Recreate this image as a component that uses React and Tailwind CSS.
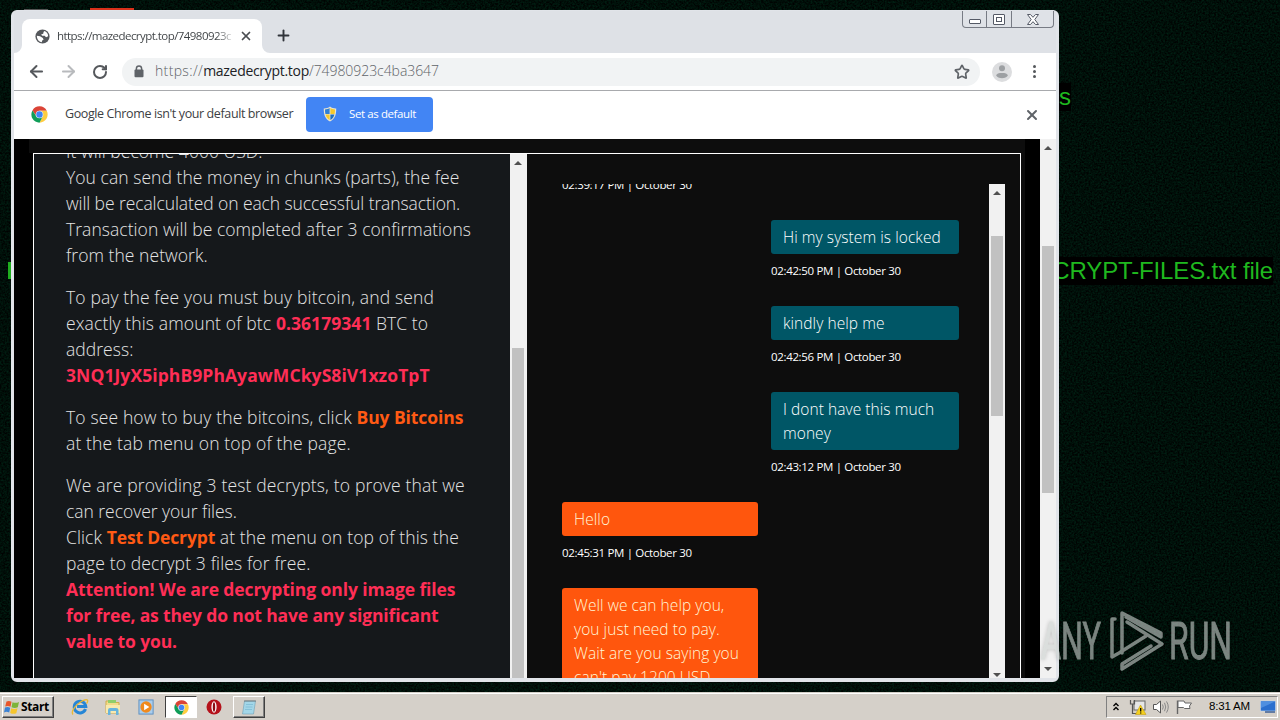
import React from "react";
import { RotateCw, Star, X, Plus, ArrowLeft, ArrowRight } from "lucide-react";

const messages = [
  { id: 1, mine: true, lines: ["Hi my system is locked"], time: "02:42:50 PM | October 30" },
  { id: 2, mine: true, lines: ["kindly help me"], time: "02:42:56 PM | October 30" },
  { id: 3, mine: true, lines: ["I dont have this much", "money"], time: "02:43:12 PM | October 30" },
  { id: 4, mine: false, lines: ["Hello"], time: "02:45:31 PM | October 30" },
  {
    id: 5,
    mine: false,
    lines: ["Well we can help you,", "you just need to pay.", "Wait are you saying you", "can't pay 1200 USD"],
  },
];

const ChromeLogo = ({ className }) => (
  <svg viewBox="0 0 48 48" className={className}>
    <path d="M24 13.5 H44.5 A23 23 0 0 0 4.1 12.5 L15 29 Z" fill="#db4437" />
    <path d="M33 29 L24 47 A23 23 0 0 0 44.5 13.5 H24 Z" fill="#ffcd40" />
    <path d="M15 29 L4.1 12.5 A23 23 0 0 0 24 47 L33 29.3 Z" fill="#0f9d58" />
    <circle cx="24" cy="24" r="10.8" fill="#f1f1f1" />
    <circle cx="24" cy="24" r="9" fill="#4285f4" />
  </svg>
);

const Shield = () => (
  <svg viewBox="0 0 16 16" className="h-4 w-4">
    <path d="M8 .5 C6 2 4 2.5 1.8 2.4 C1.6 8 3 13 8 15.5 C13 13 14.4 8 14.2 2.4 C12 2.5 10 2 8 .5Z" fill="#e9e4d0" />
    <path d="M7.6 2 C6 3 4.8 3.4 3 3.5 C3 5 3 6.5 3.4 8 H7.6Z" fill="#2f7fd6" />
    <path d="M8.4 2 C10 3 11.2 3.4 13 3.5 C13 5 13 6.5 12.6 8 H8.4Z" fill="#f6c92c" />
    <path d="M3.6 8.4 H7.6 V14 C5.4 12.8 4.2 11 3.6 8.4Z" fill="#f6c92c" />
    <path d="M12.4 8.4 H8.4 V14 C10.6 12.8 11.8 11 12.4 8.4Z" fill="#1d6fc4" />
  </svg>
);

const Globe = () => (
  <svg viewBox="0 0 24 24" className="h-[17px] w-[17px]">
    <circle cx="12" cy="12" r="10" fill="#55585c" />
    <path d="M14.5 4.3 C18 5.4 20 8.5 20 11.5 L17 13 L15 11 H11.5 L10 9 L13 8 L13.5 5.5Z" fill="#fff" />
    <path d="M4 11 L8.5 11.5 L12.5 14 L13.5 16.5 L11.5 17.5 L11 20 C7 19.6 4 16 4 11Z" fill="#fff" />
  </svg>
);

const Arrow = ({ down }) => (
  <svg viewBox="0 0 8 4" className={down ? "h-1 w-2 rotate-180" : "h-1 w-2"}>
    <path d="M4 0 L8 4 H0Z" fill="#505050" />
  </svg>
);

// white side gutters with the grey thumb, sizes come from the caller
const Scrollbar = ({ className, track, thumb, bottom }) => (
  <div className={`flex shrink-0 flex-col items-center bg-[#f1f1f1] ${className}`}>
    <div className="flex h-[17px] shrink-0 items-center">
      <Arrow />
    </div>
    <div className={`shrink-0 ${track}`} />
    <div className={`w-3 shrink-0 bg-[#c1c1c1] ${thumb}`} />
    {bottom && (
      <div className={`mt-auto ${bottom}`}>
        <Arrow down />
      </div>
    )}
  </div>
);

const Desktop = () => (
  <>
    <svg className="absolute inset-0 h-full w-full">
      <filter id="grain" x="0" y="0" width="100%" height="100%" colorInterpolationFilters="sRGB">
        <feTurbulence type="fractalNoise" baseFrequency="0.55" numOctaves="2" seed="4" />
        <feColorMatrix values="0 0 0 0 0  0 0.2 0 0 -0.04  0 0.12 0 0 -0.025  0 0 0 0 1" />
      </filter>
      <rect width="100%" height="100%" filter="url(#grain)" />
    </svg>
    <div className="absolute top-[9px] left-6 h-px w-6 bg-[#555]" />
    <div className="absolute top-2 left-[90px] h-[3px] w-11 bg-[#d9301a]" />
    <div className="absolute top-[262px] left-2 h-[17px] w-[3px] bg-[#1fae1f]" />
    <div className="absolute top-[83px] right-[209px] bg-black font-['Liberation_Sans'] text-[24px] leading-[28px] text-[#1fb81f]">
      files
    </div>
    <div className="absolute top-[257px] right-[7px] bg-black font-['Liberation_Sans'] text-[24px] leading-[28px] tracking-[-0.15px] whitespace-nowrap text-[#1fb81f]">
      DECRYPT-FILES.txt file
    </div>
  </>
);

const WindowButtons = () => (
  <div className="absolute top-0 right-[2px] flex h-[17px] rounded-b border border-t-0 border-[#777b84] bg-[#dfe2e7]">
    <div className="flex w-6 items-end justify-center border-r border-[#777b84] pb-[3px]">
      <div className="h-[5px] w-3 rounded-[1px] border border-[#555a66] bg-white" />
    </div>
    <div className="flex w-[25px] items-center justify-center border-r border-[#777b84]">
      <div className="flex h-[11px] w-3 items-center justify-center rounded-[1px] border border-[#555a66] bg-white">
        <div className="h-[5px] w-[6px] border border-[#555a66]" />
      </div>
    </div>
    <div className="flex w-[41px] items-center justify-center">
      <svg viewBox="0 0 12 11" className="h-[11px] w-3">
        <path
          d="M.5 .5 H3.5 L6 3.3 L8.5 .5 H11.5 L7.8 5.5 L11.5 10.5 H8.5 L6 7.7 L3.5 10.5 H.5 L4.2 5.5Z"
          fill="#fff"
          stroke="#555a66"
          strokeWidth="1"
        />
      </svg>
    </div>
  </div>
);

const TabStrip = () => (
  <div className="flex h-[42px] shrink-0 items-end bg-[#dee1e6]">
    <svg viewBox="0 0 8 8" className="h-2 w-2">
      <path d="M8 0 V8 H0 A8 8 0 0 0 8 0Z" fill="#fff" />
    </svg>
    <div className="flex h-[34px] w-60 items-center rounded-t-lg bg-white pl-3">
      <Globe />
      <div className="ml-[6px] w-[178px] bg-gradient-to-r from-[#3c4043] from-90% to-transparent bg-clip-text text-[11.5px] tracking-[-0.55px] whitespace-nowrap text-transparent">
        https://mazedecrypt.top/74980923c
      </div>
      <X className="ml-1 h-[14px] w-[14px] text-[#4a4d51]" strokeWidth={3} />
    </div>
    <svg viewBox="0 0 8 8" className="h-2 w-2">
      <path d="M0 0 V8 H8 A8 8 0 0 1 0 0Z" fill="#fff" />
    </svg>
    <Plus className="mb-[9px] ml-[5px] h-[17px] w-[17px] text-[#30343a]" strokeWidth={2.7} />
  </div>
);

const Toolbar = () => (
  <div className="flex h-[37px] shrink-0 items-center bg-white pl-[13px]">
    <ArrowLeft className="h-[19px] w-[19px] text-[#55585c]" strokeWidth={2.5} />
    <ArrowRight className="ml-[13px] h-[19px] w-[19px] text-[#b8babd]" strokeWidth={2.5} />
    <RotateCw className="ml-[14px] h-4 w-4 text-[#55585c]" strokeWidth={3} />
    <div className="ml-[14px] flex h-7 w-[858px] items-center rounded-full bg-[#f1f3f4] pl-3">
      <svg viewBox="0 0 10 13" className="h-[13px] w-[10px]">
        <path d="M2.4 5 V3.5 A2.6 2.6 0 0 1 7.6 3.5 V5" fill="none" stroke="#5f6368" strokeWidth="1.5" />
        <rect x=".5" y="4.6" width="9" height="7.6" rx="1" fill="#5f6368" />
      </svg>
      <div className="ml-[11px] pb-[2px] text-[14px] font-light whitespace-nowrap text-[#5f6368]">
        <span className="tracking-[0.35px]">https://</span>
        <span className="font-normal tracking-[-0.3px] text-[#202124]">mazedecrypt.top</span>
        <span className="tracking-[-0.06px]">/74980923c4ba3647</span>
      </div>
      <Star className="mr-[10px] ml-auto h-4 w-4 text-[#5f6368]" strokeWidth={2.5} />
    </div>
    <svg viewBox="0 0 20 20" className="ml-3 h-5 w-5">
      <circle cx="10" cy="10" r="10" fill="#dcdddf" />
      <circle cx="10" cy="6.3" r="3" fill="#9da0a3" />
      <path d="M4.2 13.8 C4.2 11.5 7 11 10 11 S15.8 11.5 15.8 13.8 C14 15.6 12 16.2 10 16.2 S6 15.6 4.2 13.8Z" fill="#9da0a3" />
    </svg>
    <div className="ml-[21px] flex flex-col gap-[2px]">
      <div className="h-[3px] w-[3px] rounded-full bg-[#55585c]" />
      <div className="h-[3px] w-[3px] rounded-full bg-[#55585c]" />
      <div className="h-[3px] w-[3px] rounded-full bg-[#55585c]" />
    </div>
  </div>
);

const InfoBar = () => (
  <div className="flex h-[49px] shrink-0 items-center border-t border-[#a8aaad] bg-white pb-[2px] pl-[17px]">
    <ChromeLogo className="mt-px h-[17px] w-[17px]" />
    <span className="mt-px ml-[17px] w-[229px] text-[12.5px] tracking-[-0.39px] whitespace-nowrap text-[#3c4043]">
      Google Chrome isn't your default browser
    </span>
    <button className="ml-3 flex h-[35px] w-[127px] items-center rounded bg-[#4285f4] pl-4">
      <Shield />
      <span className="ml-[11px] pb-px text-[11.5px] tracking-[-0.4px] whitespace-nowrap text-white">Set as default</span>
    </button>
    <X className="mt-px mr-4 ml-auto h-4 w-4 text-[#5f6368]" strokeWidth={3} />
  </div>
);

const Note = () => (
  <div className="w-[476px] overflow-hidden bg-[#15181b]">
    <div className="-mt-4 pl-8 text-[17.5px] leading-[26px] font-light tracking-[0.05px] whitespace-nowrap text-[#e4e4e4]">
      <p className="mb-4">
        It will become 4000 USD.
        <br />
        You can send the money in chunks (parts), the fee
        <br />
        <span className="tracking-[-0.09px]">will be recalculated on each successful transaction.</span>
        <br />
        Transaction will be completed after 3 confirmations
        <br />
        from the network.
      </p>
      <p className="mb-4">
        <span className="tracking-[0.16px]">To pay the fee you must buy bitcoin, and send</span>
        <br />
        <span className="tracking-[0.13px]">exactly this amount of btc </span>
        <b className="font-bold text-[#ff2e56]">0.36179341</b>
        <span className="tracking-[0.05px]"> BTC to</span>
        <br />
        address:
        <br />
        <b className="font-bold tracking-[0.08px] text-[#ff2e56]">3NQ1JyX5iphB9PhAyawMCkyS8iV1xzoTpT</b>
      </p>
      <p className="mb-4">
        <span className="tracking-[0.14px]">To see how to buy the bitcoins, click </span>
        <b className="font-bold tracking-[-0.08px] text-[#ff5a14]">Buy Bitcoins</b>
        <br />
        <span className="tracking-[0.15px]">at the tab menu on top of the page.</span>
      </p>
      <p>
        <span className="tracking-[0.16px]">We are providing 3 test decrypts, to prove that we</span>
        <br />
        <span className="tracking-[-0.03px]">can recover your files.</span>
        <br />
        <span className="tracking-[0.1px]">Click </span>
        <b className="font-bold tracking-[-0.15px] text-[#ff5a14]">Test Decrypt</b>
        <span className="tracking-[0.13px]"> at the menu on top of this the</span>
        <br />
        <span className="tracking-[0.14px]">page to decrypt 3 files for free.</span>
        <br />
        <b className="font-bold text-[#ff2e56]">
          <span className="tracking-[-0.1px]">Attention! We are decrypting only image files</span>
          <br />
          <span className="tracking-[-0.14px]">for free, as they do not have any significant</span>
          <br />
          <span className="tracking-[-0.12px]">value to you.</span>
        </b>
      </p>
    </div>
  </div>
);

const Chat = () => (
  <div className="flex flex-1 pt-[30px] pr-[15px] pl-[35px]">
    <div className="flex h-[494px] flex-1 flex-col overflow-hidden pr-[30px]">
      <div className="-mt-2 mb-[26px] h-[18px] shrink-0 text-[11.5px] leading-[18px] tracking-[-0.34px] text-white">
        02:39:17 PM | October 30
      </div>
      {messages.map((m) => (
        <div key={m.id} className={m.mine ? "w-[188px] shrink-0 self-end" : "w-[196px] shrink-0"}>
          <div
            className={`rounded-[3px] px-3 py-[5px] text-[15.5px] leading-6 font-light tracking-[0.06px] whitespace-nowrap ${
              m.mine ? "bg-[#005666] text-white" : "bg-[#ff560d] text-[#fff6d8]"
            }`}
          >
            {m.lines.map((line) => (
              <div key={line}>{line}</div>
            ))}
          </div>
          {m.time && (
            <div className="mt-2 mb-[26px] text-[11.5px] leading-[18px] tracking-[-0.34px] whitespace-nowrap text-white">{m.time}</div>
          )}
        </div>
      ))}
    </div>
    <Scrollbar className="h-[494px] w-4" track="h-[35px]" thumb="h-[180px]" bottom="pb-[1px]" />
  </div>
);

const Page = () => (
  <div className="flex h-[539px] bg-black">
    <div className="ml-[15px] flex w-[996px] bg-[#0d0d0d] pt-[14px] pr-[4px]">
      <div className="w-1 bg-black" />
      <div className="flex flex-1 border border-b-0 border-white">
        <Note />
        <Scrollbar className="w-[17px] pr-[1px]" track="h-[177px]" thumb="flex-1" />
        <Chat />
      </div>
    </div>
    <Scrollbar className="ml-[15px] w-4" track="h-[90px]" thumb="h-[247px]" bottom="pb-[7px]" />
  </div>
);

const Watermark = () => (
  <svg viewBox="0 0 200 70" className="absolute top-[605px] left-[1035px] h-[70px] w-[200px] opacity-60 drop-shadow-[0_0_2px_rgba(0,0,0,0.35)]">
    <g fill="#cdd3d0" stroke="#cdd3d0" strokeWidth="0.9" fontFamily="Roboto, 'Liberation Sans', sans-serif" fontSize="52">
      <text x="6" y="54" textLength="60" lengthAdjust="spacingAndGlyphs">ANY</text>
      <text x="134" y="54" textLength="63" lengthAdjust="spacingAndGlyphs">RUN</text>
    </g>
    <g fill="none" stroke="#cdd3d0" strokeWidth="3.5" strokeLinejoin="round" strokeLinecap="round">
      <path d="M80 14 L77 14 V52 L84 48 L111 31" />
      <path d="M87 48 V8 L126 28 V32 L91 12" />
      <path d="M92 17 L127 39 L87 64 V59 L116 41" />
    </g>
  </svg>
);

const Browser = () => (
  <div className="absolute top-[10px] left-[11px] flex h-[672px] w-[1048px] flex-col rounded-md border-[3px] border-t border-b-4 border-[#e1e4e9] bg-white">
    <WindowButtons />
    <TabStrip />
    <Toolbar />
    <InfoBar />
    <Page />
  </div>
);

const Taskbar = () => (
  <div className="flex h-7 shrink-0 items-center border-t border-[#d4d0c8] bg-[#d5d0c9] pt-[1px] shadow-[inset_0_1px_0_#fff]">
    <button className="ml-[2px] flex h-[22px] w-[52px] shrink-0 items-center border border-t-white border-r-[#404040] border-b-[#404040] border-l-white pl-[1px] shadow-[inset_-1px_-1px_0_#808080]">
      <svg viewBox="0 0 16 15" className="h-[15px] w-4">
        <path d="M2.5 1.5 Q5 .2 7.5 1.8 L6.5 6.8 Q4 5.4 1.2 6.6Z" fill="#e8562a" />
        <path d="M8.5 2.2 Q11.5 3.6 15 2 L13.8 7.2 Q10.8 8.6 7.5 7.2Z" fill="#7db43a" />
        <path d="M1 7.6 Q3.6 6.4 6.2 7.8 L5.2 12.6 Q2.6 11.2 0 12.4Z" fill="#3b82d4" />
        <path d="M7.2 8.2 Q10.2 9.6 13.5 8.2 L12.3 13.2 Q9.4 14.6 6.2 13Z" fill="#f5c52c" />
      </svg>
      <span className="ml-px text-[12px] font-bold tracking-[-0.35px] text-black">Start</span>
    </button>
    <svg viewBox="0 0 18 18" className="ml-[17px] h-[18px] w-[18px]">
      <path d="M14.5 11 A5.8 5.8 0 1 1 14.8 8.6 H6" fill="none" stroke="#2686d6" strokeWidth="3" />
      <path d="M2 16.5 C-1 13 7 4 14 1.8 C17 1 17.5 3 15.5 5.5" fill="none" stroke="#e9b936" strokeWidth="1.3" />
    </svg>
    <svg viewBox="0 0 18 18" className="ml-[15px] h-[18px] w-[18px]">
      <path d="M2 3 H7 L8.5 4.5 H15 V15 H2Z" fill="#f2dc8a" stroke="#d1ad4c" />
      <rect x="4" y="2" width="8" height="3" fill="#8fce6a" />
      <path d="M2 7 H16 V15 H2Z" fill="#f8e9ae" />
      <path d="M4 17 V12 Q4 10 6 10 H12 Q14.5 10 14.5 12 V17 H12 V13 H6.5 V17Z" fill="#67b4dd" />
    </svg>
    <svg viewBox="0 0 18 18" className="ml-4 h-[18px] w-[17px]">
      <rect x="1" y="1.5" width="15" height="15" fill="#a9cdec" stroke="#5c8fc0" />
      <circle cx="8.5" cy="9" r="6" fill="#f08a1d" />
      <path d="M6.5 5.5 L12 9 L6.5 12.5Z" fill="#fff" />
    </svg>
    <div className="ml-[10px] flex h-[22px] w-8 items-center justify-center border border-t-[#404040] border-r-white border-b-white border-l-[#404040] bg-white">
      <ChromeLogo className="h-[15px] w-[15px]" />
    </div>
    <svg viewBox="0 0 16 16" className="ml-[9px] h-4 w-4">
      <circle cx="8" cy="8" r="7.5" fill="#b5121b" />
      <ellipse cx="8" cy="8" rx="2.6" ry="5.8" fill="#fff" />
      <ellipse cx="8" cy="8" rx="1.2" ry="4.8" fill="#8c0d14" />
    </svg>
    <div className="ml-[11px] flex h-[22px] w-8 items-center justify-center border border-t-white border-r-[#404040] border-b-[#404040] border-l-white shadow-[inset_-1px_-1px_0_#808080]">
      <svg viewBox="0 0 16 16" className="h-4 w-4">
        <path d="M3.5 2 H14.5 L12.5 15 H1.5Z" fill="#a3d6e8" stroke="#6f9fb5" strokeWidth=".6" />
        <path d="M3.5 2 H14.5" stroke="#666" strokeWidth="1.5" strokeDasharray="1 1" />
        <path d="M5 5.5 H12 M4.5 8 H11.5 M4 10.5 H11" stroke="#7dbbd3" strokeWidth=".8" />
      </svg>
    </div>
    <div className="mr-[2px] ml-auto flex h-[22px] w-[172px] items-center border border-t-[#808080] border-r-white border-b-white border-l-[#808080] pl-[5px]">
      <svg viewBox="0 0 8 10" className="mb-px h-[10px] w-2">
        <path d="M1.5 4 L4 1.5 L6.5 4 M1.5 8 L4 5.5 L6.5 8" fill="none" stroke="#000" strokeWidth="1.4" />
      </svg>
      <svg viewBox="0 0 18 16" className="ml-[9px] h-4 w-[18px]">
        <rect x="5" y="2" width="11" height="9" fill="#e6e6e6" stroke="#666" />
        <path d="M1.5 1 V5 H5.5 V1 M3.5 5 V10 M3.5 10 V14.5 H9" fill="none" stroke="#555" strokeWidth="1.2" />
        <path d="M11.5 6 L17 15.5 H6.5Z" fill="#f4cf1c" stroke="#c79f10" strokeWidth=".6" />
        <path d="M11.7 9 V12.5 M11.7 13.5 V14.5" stroke="#000" strokeWidth="1.3" />
      </svg>
      <svg viewBox="0 0 18 16" className="ml-[5px] h-4 w-[18px]">
        <path d="M1.5 5.5 H4.5 L8.5 2 V14 L4.5 10.5 H1.5Z" fill="#fff" stroke="#555" />
        <path d="M10.5 5.5 Q12 8 10.5 10.5 M12.5 3.8 Q15 8 12.5 12.2 M14.5 2.4 Q18 8 14.5 13.6" fill="none" stroke="#888" />
      </svg>
      <svg viewBox="0 0 18 16" className="ml-[5px] h-4 w-[18px]">
        <path d="M2.5 1.5 V15" stroke="#666" strokeWidth="1.4" />
        <path d="M3 2 H9 L10 4 H16.5 L14.5 7 L15 9.5 H9.5 L8.5 8.5 H3Z" fill="#fff" stroke="#666" />
      </svg>
      <span className="ml-4 w-[41px] font-['Liberation_Sans'] text-[11.5px] tracking-[-0.2px] whitespace-nowrap text-black">
        8:31 AM
      </span>
      <svg viewBox="0 0 16 14" className="ml-[10px] h-[14px] w-4">
        <rect x=".5" y="1" width="15" height="10" fill="#2b6fce" stroke="#c9d9ee" strokeWidth=".6" />
        <path d="M1 1.5 H15 L1 8Z" fill="#4f8fe0" />
        <path d="M5 12 H15" stroke="#3d5f94" strokeWidth="1.5" />
      </svg>
    </div>
  </div>
);

export default function App() {
  return (
    <div className="flex h-[720px] w-[1280px] flex-col overflow-hidden font-['Open_Sans','Noto_Sans',sans-serif]">
      <div className="relative flex-1 overflow-hidden bg-[#000f09]">
        <Desktop />
        <Browser />
        <Watermark />
      </div>
      <Taskbar />
    </div>
  );
}
